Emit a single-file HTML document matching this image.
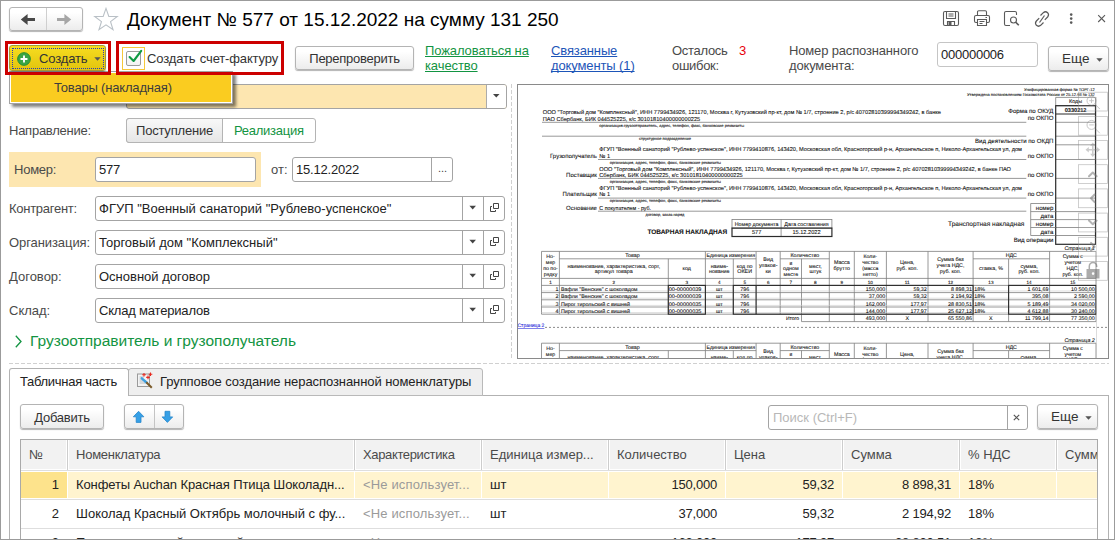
<!DOCTYPE html>
<html lang="ru"><head><meta charset="utf-8"><title>Документ № 577</title>
<style>
*{box-sizing:border-box;margin:0;padding:0}
html,body{width:1115px;height:540px;overflow:hidden;background:#fff}
body{position:relative;font-family:"Liberation Sans",sans-serif;font-size:13px;color:#333}
.a{position:absolute}
.t{position:absolute;white-space:nowrap;line-height:16px;font-size:13px}
.frame{position:absolute;left:0;top:0;width:1115px;height:540px;border:1px solid #9b9b9b;pointer-events:none;z-index:50}
.btn{position:absolute;border:1px solid #b4b4b4;border-radius:3px;background:linear-gradient(#ffffff 20%,#ececec);box-shadow:0 1px 1px rgba(0,0,0,.3);text-align:center;white-space:nowrap;color:#333;font-size:13px}
.inp{position:absolute;border:1px solid #a4a4a4;border-radius:3px;background:#fff;white-space:nowrap;overflow:hidden;font-size:13px;color:#222;padding-left:3px}
.lbl{position:absolute;white-space:nowrap;color:#4a4a4a;font-size:13px;line-height:16px}
.red{position:absolute;border:3px solid #cc0000}
.sep{position:absolute;top:0;bottom:0;width:1px;background:#a4a4a4}
.lnk{text-decoration-skip-ink:none;position:absolute;font-size:13px;line-height:16px;text-decoration:underline;white-space:nowrap}
svg{position:absolute;overflow:visible}
.h{color:#4a4a4a}.c{color:#222}.g{color:#9a9a9a}.r{text-align:right}
</style></head><body>
<div class="frame"></div>

<!-- ================= header ================= -->
<div id="hdr">
<div class="btn" style="left:9px;top:7px;width:74px;height:24px"></div>
<div class="a" style="left:46px;top:8px;width:1px;height:22px;background:#cfcfcf"></div>
<svg style="left:9px;top:7px" width="74" height="24" viewBox="0 0 74 24">
<path d="M11.8 12.5 L18.6 7.100 V11 H26 V14 H18.6 V17.900 Z" fill="#484848"/>
<path d="M62.2 12.5 L55.4 7.100 V11 H48 V14 H55.4 V17.900 Z" fill="#a6a6a6"/>
</svg>
<svg style="left:92.5px;top:7px" width="26" height="24" viewBox="0 0 24 22">
<path d="M12 1.2 L14.6 8.6 L22.4 8.7 L16.2 13.4 L18.5 20.9 L12 16.4 L5.5 20.9 L7.8 13.4 L1.6 8.7 L9.4 8.6 Z" fill="#fff" stroke="#b9c0c6" stroke-width="1"/>
</svg>
<div class="t" id="title" style="left:127px;top:8px;font-size:19px;line-height:24px;color:#000">Документ № 577 от 15.12.2022 на сумму 131 250</div>
<!-- right icons -->
<svg style="left:943px;top:10px" width="170" height="18" viewBox="0 0 170 18" fill="none" stroke="#5a5a5a" stroke-width="1.1">
<!-- save -->
<path d="M2 1.5 H14 Q15.5 1.5 15.5 3 V14 Q15.5 15.5 14 15.5 H2 Q0.5 15.5 0.5 14 V3 Q0.5 1.5 2 1.5 Z"/>
<path d="M3.5 1.5 V8.5 H12.5 V1.5 M5.5 4 H10.5 M5.5 6 H10.5"/>
<path d="M4.5 15.5 V11.5 H11.5 V15.5"/><rect x="5.5" y="12" width="3" height="3.5" fill="#5a5a5a" stroke="none"/>
<!-- print -->
<g transform="translate(31,0)">
<path d="M3.5 5.5 V2 Q3.5 0.8 4.7 0.8 H11.3 Q12.5 0.8 12.5 2 V5.5"/>
<path d="M3.5 12.5 H2 Q0.5 12.5 0.5 11 V7 Q0.5 5.5 2 5.5 H14 Q15.5 5.5 15.5 7 V11 Q15.5 12.5 14 12.5 H12.5"/>
<path d="M3.5 9.5 H12.5 V15.5 H3.5 Z M5.5 11.5 H10.5 M5.5 13.5 H8.5 M11.5 7.5 H13"/>
</g>
<!-- preview -->
<g transform="translate(61,0)">
<path d="M6 15.5 H2 Q0.5 15.5 0.5 14 V3 Q0.5 1.5 2 1.5 H11 Q12.5 1.5 12.5 3 V5"/>
<circle cx="9.5" cy="10" r="3"/><path d="M11.8 12.3 L14.8 15.3" stroke-width="1.6"/>
</g>
<!-- link -->
<g transform="translate(91,0)" stroke-width="1.2">
<path d="M6.5 5.5 L9.3 2.7 Q11.5 0.8 13.6 2.7 Q15.5 4.8 13.6 7 L10.8 9.8"/>
<path d="M9.5 12.5 L6.7 15.3 Q4.5 17.2 2.4 15.3 Q0.5 13.2 2.4 11 L5.2 8.2"/>
<path d="M5.5 12.5 L10.5 5.5"/>
</g>
<!-- dots -->
<g fill="#5a5a5a" stroke="none"><circle cx="128.2" cy="4.6" r="1.3"/><circle cx="128.2" cy="8.6" r="1.3"/><circle cx="128.2" cy="12.6" r="1.3"/></g>
<!-- close -->
<path d="M155.2 5.2 L162 12 M162 5.2 L155.2 12" stroke-width="1.1"/>
</svg>
</div>

<!-- ================= dropdown menu ================= -->
<div style="position:relative;z-index:5">
<div class="a" style="left:9px;top:71px;width:224px;height:33px;background:#facc20;border:1px solid #a3a3a3;box-shadow:inset 0 0 0 1px #fff,3px 3px 3px rgba(0,0,0,.5)"></div>
<div class="t" style="left:54px;top:80px;color:#3d3d3d;letter-spacing:-0.18px">Товары (накладная)</div>
</div>

<!-- ================= toolbar ================= -->
<div id="tb" style="position:relative;z-index:6">
<div class="red" style="left:5px;top:41px;width:106px;height:34px"></div>
<div class="btn" id="create" style="left:9px;top:45px;width:97px;height:26px;background:linear-gradient(#f7dd20,#e2c40e);border-color:#a59a35;box-shadow:0 1px 1px rgba(0,0,0,.3)"></div>
<div class="a" style="left:12px;top:48px;width:92px;height:21px;border:1px dotted #2b3bb5"></div>
<svg style="left:17px;top:51.500px" width="14" height="14" viewBox="0 0 15 15"><circle cx="7.5" cy="7.5" r="6.8" fill="#3aa544" stroke="#1f8a2e" stroke-width="1"/><path d="M7.5 3.8 V11.2 M3.8 7.5 H11.2" stroke="#fff" stroke-width="2"/></svg>
<div class="t" style="left:39px;top:51px;letter-spacing:-0.15px">Создать</div>
<svg style="left:94px;top:57px" width="7" height="4" viewBox="0 0 7 4"><path d="M0.3 0.3 H6.7 L3.5 3.800 Z" fill="#555"/></svg>

<div class="red" style="left:116px;top:41px;width:168px;height:34px"></div>
<div class="a" style="left:122px;top:47px;width:23px;height:23px;border:1px solid #f6c83a;background:#fff"></div>
<div class="a" style="left:126px;top:51px;width:15px;height:15px;border:1px solid #9c9c9c;border-radius:2px;background:linear-gradient(#fff,#f3f3f3)"></div>
<svg style="left:126px;top:48px" width="18" height="18" viewBox="0 0 18 18"><path d="M3.600 9 L7.600 13 L15.200 2.900" fill="none" stroke="#0f9a43" stroke-width="2.1" stroke-linecap="round" stroke-linejoin="round"/></svg>
<div class="t" style="left:147px;top:51px;word-spacing:1px;letter-spacing:-0.15px">Создать счет-фактуру</div>
<div class="btn" style="left:295px;top:46px;width:119px;height:24px;line-height:24px;letter-spacing:-0.26px">Перепроверить</div>
<div class="lnk" style="left:425px;top:43px;line-height:15px;color:#129442;letter-spacing:-0.1px">Пожаловаться на<br>качество</div>
<div class="lnk" style="left:551px;top:43px;line-height:15px;color:#1d55b8;letter-spacing:-0.12px">Связанные<br>документы (1)</div>
<div class="lbl" style="left:672px;top:43px;line-height:15px;letter-spacing:-0.3px">Осталось<br>ошибок:</div>
<div class="t" style="left:739px;top:43px;line-height:15px;color:#e8000b">3</div>
<div class="lbl" style="left:789px;top:43px;line-height:15px;letter-spacing:-0.16px">Номер распознанного<br>документа:</div>
<div class="inp" style="left:937px;top:42px;width:101px;height:25px;line-height:23px;border-color:#c5c5c5;letter-spacing:-0.25px">000000006</div>
<div class="btn" style="left:1048px;top:46px;width:61px;height:25px;line-height:24px;font-size:13.5px;text-align:left;padding-left:13px">Еще</div>
<svg style="left:1095.500px;top:57.500px" width="7" height="4" viewBox="0 0 7 4"><path d="M0.3 0.3 H6.7 L3.5 3.800 Z" fill="#555"/></svg>
</div>

<!-- ================= form ================= -->
<div id="form">
<div class="inp" style="left:126px;top:84px;width:381px;height:25px;background:#fde6b0"></div>
<div class="a" style="left:486px;top:85px;width:20px;height:23px;background:#fff;border-left:1px solid #ababab;border-radius:0 2px 2px 0"></div>
<svg style="left:492.500px;top:94.300px" width="6.6" height="3.6" viewBox="0 0 6.6 3.6"><path d="M0 0 H6.6 L3.3 3.600 Z" fill="#444"/></svg>

<div class="lbl" style="left:9px;top:123px;letter-spacing:-0.25px">Направление:</div>
<div class="btn" style="left:126px;top:118px;width:190px;height:25px;background:#fff;box-shadow:none"></div>
<div class="btn" style="left:126px;top:118px;width:97px;height:25px;line-height:24px;border-radius:3px 0 0 3px;box-shadow:none;background:linear-gradient(#f8f8f8,#e6e6e6);letter-spacing:-0.2px">Поступление</div>
<div class="t" style="left:234px;top:123px;color:#129442;letter-spacing:-0.26px">Реализация</div>

<div class="a" style="left:9px;top:152px;width:252px;height:35px;background:#fde6b0"></div>
<div class="lbl" style="left:14px;top:162px;letter-spacing:-0.24px">Номер:</div>
<div class="inp" style="left:95px;top:157px;width:161px;height:25px;line-height:23px;letter-spacing:-0.2px">577</div>
<div class="lbl" style="left:271px;top:162px">от:</div>
<div class="inp" style="left:292px;top:157px;width:161px;height:25px;line-height:23px;letter-spacing:-0.2px">15.12.2022<div class="sep" style="left:138px"></div></div>
<div class="t" style="left:438px;top:160px;font-size:11px;color:#444">...</div>

<div class="lbl" style="left:9px;top:201px;letter-spacing:-0.27px">Контрагент:</div>
<div class="inp fld" style="left:95px;top:196px;width:410px;height:25px;line-height:23px">ФГУП "Военный санаторий "Рублево-успенское"<div class="sep" style="left:366px"></div><div class="sep" style="left:387px"></div></div>
<div class="lbl" style="left:9px;top:235px;letter-spacing:-0.08px">Организация:</div>
<div class="inp fld" style="left:95px;top:230px;width:410px;height:25px;line-height:23px">Торговый дом "Комплексный"<div class="sep" style="left:366px"></div><div class="sep" style="left:387px"></div></div>
<div class="lbl" style="left:9px;top:269px">Договор:</div>
<div class="inp fld" style="left:95px;top:264px;width:410px;height:25px;line-height:23px">Основной договор<div class="sep" style="left:366px"></div><div class="sep" style="left:387px"></div></div>
<div class="lbl" style="left:9px;top:303px">Склад:</div>
<div class="inp fld" style="left:95px;top:298px;width:410px;height:25px;line-height:23px;letter-spacing:-0.19px">Склад материалов<div class="sep" style="left:366px"></div><div class="sep" style="left:387px"></div></div>
<svg style="left:0;top:0" width="520" height="330">
<defs><g id="dd"><path d="M0 0 H6.6 L3.3 3.600 Z" fill="#444"/></g>
<g id="op" fill="none" stroke="#444" stroke-width="1"><path d="M3.5 0.5 H8.5 V5.5 H3.5 Z"/><path d="M2 3.5 H0.5 V8.5 H5.5 V7"/></g></defs>
<use href="#dd" x="469.4" y="205.800"/><use href="#dd" x="469.4" y="239.800"/><use href="#dd" x="469.4" y="273.800"/><use href="#dd" x="469.4" y="307.800"/>
<use href="#op" x="490" y="203"/><use href="#op" x="490" y="237"/><use href="#op" x="490" y="271"/><use href="#op" x="490" y="305"/>
</svg>
<svg style="left:14.500px;top:334.800px" width="7" height="13" viewBox="0 0 7 13"><path d="M0.800 0.800 L6 6.500 L0.800 12.200" fill="none" stroke="#129442" stroke-width="1.3"/></svg>
<div class="t" style="left:30px;top:331px;font-size:15.5px;line-height:20px;color:#129442">Грузоотправитель и грузополучатель</div>
<div class="a" style="left:511px;top:84px;width:1px;height:276px;background:repeating-linear-gradient(180deg,#d0d0d0 0 4px,transparent 4px 6px)"></div>
<div class="a" style="left:9px;top:363px;width:1100px;height:1px;background:repeating-linear-gradient(90deg,#d0d0d0 0 4px,transparent 4px 6px)"></div>
</div>

<!-- ================= preview ================= -->
<div id="pv" class="a" style="left:517px;top:84px;width:592px;height:275px;border:1px solid #8a8a8a;background:#fff;overflow:hidden">
<!--PREVIEW-->
<svg style="left:-518px;top:-85px" width="1115" height="540" viewBox="0 0 1115 540" font-family="Liberation Sans, sans-serif" fill="#111" stroke="#111" stroke-width="0.09" text-rendering="geometricPrecision">
<text x="1094.8" y="91.2" font-size="4.00" text-anchor="end">Унифицированная форма № ТОРГ-12</text>
<text x="1094.8" y="95.7" font-size="4.00" text-anchor="end">Утверждена постановлением Госкомстата России от 25.12.98 № 132</text>
<text x="542.8" y="113.5" font-size="5.64" textLength="398.2" lengthAdjust="spacingAndGlyphs">ООО "Торговый дом "Комплексный", ИНН 7799434926, 121170, Москва г, Кутузовский пр-кт, дом № 1/7, строение 2, р/с 40702810399994349242, в банке</text>
<text x="542.8" y="120.6" font-size="5.64" textLength="157.4" lengthAdjust="spacingAndGlyphs">ПАО Сбербанк, БИК 044525225, к/с 30101810400000000225</text>
<path d="M542.0 122.3H1026.3" stroke="#7d7d7d" stroke-width="0.8"/>
<text x="599.3" y="126.8" font-size="4.00" textLength="144.8" lengthAdjust="spacingAndGlyphs">организация-грузоотправитель, адрес, телефон, факс, банковские реквизиты</text>
<path d="M542.0 136.2H1026.3" stroke="#7d7d7d" stroke-width="0.8"/>
<text x="639.0" y="140.2" font-size="4.00" textLength="52.0" lengthAdjust="spacingAndGlyphs">структурное подразделение</text>
<text x="599.3" y="151.1" font-size="5.64" textLength="422.7" lengthAdjust="spacingAndGlyphs">ФГУП "Военный санаторий "Рублево-успенское", ИНН 7799410876, 143420, Московская обл, Красногорский р-н, Архангельское п, Николо-Архангельская ул, дом</text>
<text x="596.9" y="157.6" font-size="6.00" text-anchor="end">Грузополучатель</text>
<text x="599.3" y="157.5" font-size="5.64">№ 1</text>
<path d="M598.0 159.5H1026.3" stroke="#7d7d7d" stroke-width="0.8"/>
<text x="609.8" y="163.7" font-size="4.00" textLength="111.2" lengthAdjust="spacingAndGlyphs">организация, адрес, телефон, факс, банковские реквизиты</text>
<text x="599.3" y="170.5" font-size="5.64" textLength="411.7" lengthAdjust="spacingAndGlyphs">ООО "Торговый дом "Комплексный", ИНН 7799434926, 121170, Москва г, Кутузовский пр-кт, дом № 1/7, строение 2, р/с 40702810399994349242, в банке ПАО</text>
<text x="596.9" y="176.9" font-size="6.00" text-anchor="end">Поставщик</text>
<text x="599.3" y="176.8" font-size="5.64" textLength="143.4" lengthAdjust="spacingAndGlyphs">Сбербанк, БИК 044525225, к/с 30101810400000000225</text>
<path d="M598.0 178.4H1026.3" stroke="#7d7d7d" stroke-width="0.8"/>
<text x="609.8" y="182.8" font-size="4.00" textLength="111.2" lengthAdjust="spacingAndGlyphs">организация, адрес, телефон, факс, банковские реквизиты</text>
<text x="599.3" y="189.9" font-size="5.64" textLength="422.7" lengthAdjust="spacingAndGlyphs">ФГУП "Военный санаторий "Рублево-успенское", ИНН 7799410876, 143420, Московская обл, Красногорский р-н, Архангельское п, Николо-Архангельская ул, дом</text>
<text x="596.9" y="196.2" font-size="6.00" text-anchor="end">Плательщик</text>
<text x="599.3" y="196.1" font-size="5.64">№ 1</text>
<path d="M598.0 198.1H1026.3" stroke="#7d7d7d" stroke-width="0.8"/>
<text x="609.8" y="202.4" font-size="4.00" textLength="111.2" lengthAdjust="spacingAndGlyphs">организация, адрес, телефон, факс, банковские реквизиты</text>
<text x="596.9" y="209.8" font-size="6.00" text-anchor="end">Основание</text>
<text x="599.3" y="209.9" font-size="5.64" textLength="51.8" lengthAdjust="spacingAndGlyphs">С покупателем - руб.</text>
<path d="M598.0 211.2H1026.3" stroke="#7d7d7d" stroke-width="0.8"/>
<text x="645.6" y="215.8" font-size="4.00" textLength="38.8" lengthAdjust="spacingAndGlyphs">договор, заказ-наряд</text>
<text x="1053.5" y="112.5" font-size="6.10" text-anchor="end">Форма по ОКУД</text>
<text x="1053.5" y="120.1" font-size="6.10" text-anchor="end">по ОКПО</text>
<text x="1053.5" y="142.9" font-size="6.10" text-anchor="end">Вид деятельности по ОКДП</text>
<text x="1053.5" y="157.6" font-size="6.10" text-anchor="end">по ОКПО</text>
<text x="1053.5" y="176.5" font-size="6.10" text-anchor="end">по ОКПО</text>
<text x="1053.5" y="195.5" font-size="6.10" text-anchor="end">по ОКПО</text>
<text x="1053.5" y="209.7" font-size="6.10" text-anchor="end">номер</text>
<text x="1053.5" y="217.7" font-size="6.10" text-anchor="end">дата</text>
<text x="1053.5" y="225.7" font-size="6.10" text-anchor="end">номер</text>
<text x="1053.5" y="233.7" font-size="6.10" text-anchor="end">дата</text>
<text x="1053.5" y="241.9" font-size="6.10" text-anchor="end">Вид операции</text>
<text x="1024.4" y="226.0" font-size="6.55" text-anchor="end">Транспортная накладная</text>
<text x="1075.6" y="103.4" font-size="5.40" text-anchor="middle">Коды</text>
<text x="1075.6" y="111.8" font-size="5.60" text-anchor="middle" font-weight="bold">0330212</text>
<path d="M1055.7 105.7H1095.5" stroke="#7d7d7d" stroke-width="0.8"/>
<path d="M1055.7 122.3H1095.5" stroke="#7d7d7d" stroke-width="0.8"/>
<path d="M1055.7 136.2H1095.5" stroke="#7d7d7d" stroke-width="0.8"/>
<path d="M1055.7 144.8H1095.5" stroke="#7d7d7d" stroke-width="0.8"/>
<path d="M1055.7 159.5H1095.5" stroke="#7d7d7d" stroke-width="0.8"/>
<path d="M1055.7 178.4H1095.5" stroke="#7d7d7d" stroke-width="0.8"/>
<path d="M1055.7 198.1H1095.5" stroke="#7d7d7d" stroke-width="0.8"/>
<path d="M1055.7 211.6H1095.5" stroke="#7d7d7d" stroke-width="0.8"/>
<path d="M1055.7 219.6H1095.5" stroke="#7d7d7d" stroke-width="0.8"/>
<path d="M1055.7 227.5H1095.5" stroke="#7d7d7d" stroke-width="0.8"/>
<path d="M1055.7 235.5H1095.5" stroke="#7d7d7d" stroke-width="0.8"/>
<path d="M1055.7 97.4H1095.5" stroke="#7d7d7d" stroke-width="0.8"/>
<path d="M1055.7 97.4V105.7" stroke="#7d7d7d" stroke-width="0.8"/>
<path d="M1095.5 97.4V105.7" stroke="#7d7d7d" stroke-width="0.8"/>
<rect x="1055.7" y="105.7" width="39.8" height="138.6" fill="none" stroke="#2b2b2b" stroke-width="1.2"/>
<path d="M1055.7 114.0H1095.5" stroke="#2b2b2b" stroke-width="1.0"/>
<path d="M1030.7 203.5V235.5" stroke="#7d7d7d" stroke-width="0.8"/>
<path d="M1030.7 203.5H1055.7" stroke="#7d7d7d" stroke-width="0.8"/>
<path d="M1030.7 211.6H1055.7" stroke="#7d7d7d" stroke-width="0.8"/>
<path d="M1030.7 219.6H1055.7" stroke="#7d7d7d" stroke-width="0.8"/>
<path d="M1030.7 227.5H1055.7" stroke="#7d7d7d" stroke-width="0.8"/>
<path d="M1030.7 235.5H1055.7" stroke="#7d7d7d" stroke-width="0.8"/>
<text x="647.4" y="234.0" font-size="6.50" textLength="79.8" lengthAdjust="spacingAndGlyphs" font-weight="bold">ТОВАРНАЯ НАКЛАДНАЯ</text>
<rect x="732.0" y="219.4" width="99.9" height="8.7" fill="none" stroke="#7d7d7d" stroke-width="0.8"/>
<path d="M781.1 219.4V236.5" stroke="#7d7d7d" stroke-width="0.8"/>
<rect x="732.0" y="228.1" width="99.9" height="8.4" fill="none" stroke="#2b2b2b" stroke-width="1.2"/>
<text x="756.6" y="225.6" font-size="5.30" text-anchor="middle">Номер документа</text>
<text x="806.5" y="225.6" font-size="5.30" text-anchor="middle">Дата составления</text>
<text x="756.6" y="234.3" font-size="5.64" text-anchor="middle">577</text>
<text x="806.5" y="234.3" font-size="5.64" text-anchor="middle">15.12.2022</text>
<text x="1094.8" y="249.8" font-size="5.30" text-anchor="end" font-style="italic">Страница 1</text>
<path d="M541.5 251.4H1096.0" stroke="#7d7d7d" stroke-width="0.8"/>
<path d="M541.5 278.4H1096.0" stroke="#7d7d7d" stroke-width="0.8"/>
<path d="M559.4 258.8H705.4" stroke="#7d7d7d" stroke-width="0.8"/>
<path d="M705.4 258.8H756.1" stroke="#7d7d7d" stroke-width="0.8"/>
<path d="M780.2 258.8H829.3" stroke="#7d7d7d" stroke-width="0.8"/>
<path d="M973.1 258.8H1049.6" stroke="#7d7d7d" stroke-width="0.8"/>
<path d="M541.5 251.4V314.2" stroke="#7d7d7d" stroke-width="0.8"/>
<path d="M559.4 251.4V314.2" stroke="#7d7d7d" stroke-width="0.8"/>
<path d="M668.3 258.8V314.2" stroke="#7d7d7d" stroke-width="0.8"/>
<path d="M705.4 251.4V314.2" stroke="#7d7d7d" stroke-width="0.8"/>
<path d="M733.3 258.8V314.2" stroke="#7d7d7d" stroke-width="0.8"/>
<path d="M756.1 251.4V314.2" stroke="#7d7d7d" stroke-width="0.8"/>
<path d="M780.2 251.4V314.2" stroke="#7d7d7d" stroke-width="0.8"/>
<path d="M801.5 258.8V314.2" stroke="#7d7d7d" stroke-width="0.8"/>
<path d="M829.3 251.4V314.2" stroke="#7d7d7d" stroke-width="0.8"/>
<path d="M854.3 251.4V314.2" stroke="#7d7d7d" stroke-width="0.8"/>
<path d="M886.4 251.4V314.2" stroke="#7d7d7d" stroke-width="0.8"/>
<path d="M928.0 251.4V314.2" stroke="#7d7d7d" stroke-width="0.8"/>
<path d="M973.1 251.4V314.2" stroke="#7d7d7d" stroke-width="0.8"/>
<path d="M1008.6 258.8V314.2" stroke="#7d7d7d" stroke-width="0.8"/>
<path d="M1049.6 251.4V314.2" stroke="#7d7d7d" stroke-width="0.8"/>
<path d="M1096.0 251.4V314.2" stroke="#7d7d7d" stroke-width="0.8"/>
<text x="550.5" y="258.0" font-size="5.20" text-anchor="middle">Но-</text>
<text x="550.5" y="263.9" font-size="5.20" text-anchor="middle">мер</text>
<text x="550.5" y="269.8" font-size="5.20" text-anchor="middle">по по-</text>
<text x="550.5" y="275.7" font-size="5.20" text-anchor="middle">рядку</text>
<text x="632.4" y="256.9" font-size="5.35" text-anchor="middle">Товар</text>
<text x="613.8" y="267.5" font-size="5.35" text-anchor="middle">наименование, характеристика, сорт,</text>
<text x="613.8" y="273.4" font-size="5.35" text-anchor="middle">артикул товара</text>
<text x="686.8" y="270.4" font-size="5.35" text-anchor="middle">код</text>
<text x="730.8" y="256.9" font-size="5.20" text-anchor="middle">Единица измерения</text>
<text x="719.3" y="267.5" font-size="5.35" text-anchor="middle">наиме-</text>
<text x="719.3" y="273.4" font-size="5.35" text-anchor="middle">нование</text>
<text x="744.7" y="267.5" font-size="5.35" text-anchor="middle">код по</text>
<text x="744.7" y="273.4" font-size="5.35" text-anchor="middle">ОКЕИ</text>
<text x="768.2" y="260.8" font-size="5.35" text-anchor="middle">Вид</text>
<text x="768.2" y="266.7" font-size="5.35" text-anchor="middle">упаков-</text>
<text x="768.2" y="272.6" font-size="5.35" text-anchor="middle">ки</text>
<text x="804.8" y="256.9" font-size="5.35" text-anchor="middle">Количество</text>
<text x="790.9" y="264.5" font-size="5.35" text-anchor="middle">в</text>
<text x="790.9" y="270.4" font-size="5.35" text-anchor="middle">одном</text>
<text x="790.9" y="276.3" font-size="5.35" text-anchor="middle">месте</text>
<text x="815.4" y="267.5" font-size="5.35" text-anchor="middle">мест,</text>
<text x="815.4" y="273.4" font-size="5.35" text-anchor="middle">штук</text>
<text x="841.8" y="263.8" font-size="5.35" text-anchor="middle">Масса</text>
<text x="841.8" y="269.7" font-size="5.35" text-anchor="middle">брутто</text>
<text x="870.3" y="257.8" font-size="5.20" text-anchor="middle">Коли-</text>
<text x="870.3" y="263.7" font-size="5.20" text-anchor="middle">чество</text>
<text x="870.3" y="269.6" font-size="5.20" text-anchor="middle">(масса</text>
<text x="870.3" y="275.5" font-size="5.20" text-anchor="middle">нетто)</text>
<text x="907.2" y="263.8" font-size="5.35" text-anchor="middle">Цена,</text>
<text x="907.2" y="269.7" font-size="5.35" text-anchor="middle">руб. коп.</text>
<text x="950.5" y="260.8" font-size="5.35" text-anchor="middle">Сумма без</text>
<text x="950.5" y="266.7" font-size="5.35" text-anchor="middle">учета НДС,</text>
<text x="950.5" y="272.6" font-size="5.35" text-anchor="middle">руб. коп.</text>
<text x="1011.3" y="256.9" font-size="5.35" text-anchor="middle">НДС</text>
<text x="990.9" y="270.4" font-size="5.35" text-anchor="middle">ставка, %</text>
<text x="1029.1" y="267.5" font-size="5.35" text-anchor="middle">сумма,</text>
<text x="1029.1" y="273.4" font-size="5.35" text-anchor="middle">руб. коп.</text>
<text x="1072.8" y="257.8" font-size="5.20" text-anchor="middle">Сумма с</text>
<text x="1072.8" y="263.7" font-size="5.20" text-anchor="middle">учетом</text>
<text x="1072.8" y="269.6" font-size="5.20" text-anchor="middle">НДС,</text>
<text x="1072.8" y="275.5" font-size="5.20" text-anchor="middle">руб. коп.</text>
<path d="M541.5 285.4H1096.0" stroke="#7d7d7d" stroke-width="0.8"/>
<text x="550.5" y="283.7" font-size="4.60" text-anchor="middle">1</text>
<text x="613.8" y="283.7" font-size="4.60" text-anchor="middle">2</text>
<text x="686.8" y="283.7" font-size="4.60" text-anchor="middle">3</text>
<text x="719.3" y="283.7" font-size="4.60" text-anchor="middle">4</text>
<text x="744.7" y="283.7" font-size="4.60" text-anchor="middle">5</text>
<text x="768.2" y="283.7" font-size="4.60" text-anchor="middle">6</text>
<text x="790.9" y="283.7" font-size="4.60" text-anchor="middle">7</text>
<text x="815.4" y="283.7" font-size="4.60" text-anchor="middle">8</text>
<text x="841.8" y="283.7" font-size="4.60" text-anchor="middle">9</text>
<text x="870.3" y="283.7" font-size="4.60" text-anchor="middle">10</text>
<text x="907.2" y="283.7" font-size="4.60" text-anchor="middle">11</text>
<text x="950.5" y="283.7" font-size="4.60" text-anchor="middle">12</text>
<text x="990.9" y="283.7" font-size="4.60" text-anchor="middle">13</text>
<text x="1029.1" y="283.7" font-size="4.60" text-anchor="middle">14</text>
<text x="1072.8" y="283.7" font-size="4.60" text-anchor="middle">15</text>
<path d="M541.5 292.6H1096.0" stroke="#7d7d7d" stroke-width="0.8"/>
<path d="M541.5 291.0H1096.0" stroke="#c9c9c9" stroke-width="0.6"/>
<text x="558.4" y="291.1" font-size="5.35" text-anchor="end">1</text>
<text x="560.9" y="291.1" font-size="5.35">Вафли "Венские" с шоколадом</text>
<text x="668.8" y="291.1" font-size="5.35" textLength="32.6" lengthAdjust="spacingAndGlyphs">00-00000039</text>
<text x="719.3" y="291.1" font-size="5.35" text-anchor="middle">шт</text>
<text x="744.7" y="291.1" font-size="5.35" text-anchor="middle">796</text>
<text x="885.2" y="291.1" font-size="5.35" text-anchor="end">150,000</text>
<text x="926.8" y="291.1" font-size="5.35" text-anchor="end">59,32</text>
<text x="971.9" y="291.1" font-size="5.35" text-anchor="end">8 898,31</text>
<text x="974.3" y="291.1" font-size="5.35">18%</text>
<text x="1048.4" y="291.1" font-size="5.35" text-anchor="end">1 601,69</text>
<text x="1094.8" y="291.1" font-size="5.35" text-anchor="end">10 500,00</text>
<path d="M541.5 299.8H1096.0" stroke="#7d7d7d" stroke-width="0.8"/>
<path d="M541.5 298.2H1096.0" stroke="#c9c9c9" stroke-width="0.6"/>
<text x="558.4" y="298.3" font-size="5.35" text-anchor="end">2</text>
<text x="560.9" y="298.3" font-size="5.35">Вафли "Венские" с шоколадом</text>
<text x="668.8" y="298.3" font-size="5.35" textLength="32.6" lengthAdjust="spacingAndGlyphs">00-00000039</text>
<text x="719.3" y="298.3" font-size="5.35" text-anchor="middle">шт</text>
<text x="744.7" y="298.3" font-size="5.35" text-anchor="middle">796</text>
<text x="885.2" y="298.3" font-size="5.35" text-anchor="end">37,000</text>
<text x="926.8" y="298.3" font-size="5.35" text-anchor="end">59,32</text>
<text x="971.9" y="298.3" font-size="5.35" text-anchor="end">2 194,92</text>
<text x="974.3" y="298.3" font-size="5.35">18%</text>
<text x="1048.4" y="298.3" font-size="5.35" text-anchor="end">395,08</text>
<text x="1094.8" y="298.3" font-size="5.35" text-anchor="end">2 590,00</text>
<path d="M541.5 307.0H1096.0" stroke="#7d7d7d" stroke-width="0.8"/>
<path d="M541.5 305.4H1096.0" stroke="#c9c9c9" stroke-width="0.6"/>
<text x="558.4" y="305.5" font-size="5.35" text-anchor="end">3</text>
<text x="560.9" y="305.5" font-size="5.35">Пирог тирольский с вишней</text>
<text x="668.8" y="305.5" font-size="5.35" textLength="32.6" lengthAdjust="spacingAndGlyphs">00-00000035</text>
<text x="719.3" y="305.5" font-size="5.35" text-anchor="middle">шт</text>
<text x="744.7" y="305.5" font-size="5.35" text-anchor="middle">796</text>
<text x="885.2" y="305.5" font-size="5.35" text-anchor="end">162,000</text>
<text x="926.8" y="305.5" font-size="5.35" text-anchor="end">177,97</text>
<text x="971.9" y="305.5" font-size="5.35" text-anchor="end">28 830,51</text>
<text x="974.3" y="305.5" font-size="5.35">18%</text>
<text x="1048.4" y="305.5" font-size="5.35" text-anchor="end">5 189,49</text>
<text x="1094.8" y="305.5" font-size="5.35" text-anchor="end">34 020,00</text>
<path d="M541.5 314.2H1096.0" stroke="#7d7d7d" stroke-width="0.8"/>
<path d="M541.5 312.6H1096.0" stroke="#c9c9c9" stroke-width="0.6"/>
<text x="558.4" y="312.7" font-size="5.35" text-anchor="end">4</text>
<text x="560.9" y="312.7" font-size="5.35">Пирог тирольский с вишней</text>
<text x="668.8" y="312.7" font-size="5.35" textLength="32.6" lengthAdjust="spacingAndGlyphs">00-00000035</text>
<text x="719.3" y="312.7" font-size="5.35" text-anchor="middle">шт</text>
<text x="744.7" y="312.7" font-size="5.35" text-anchor="middle">796</text>
<text x="885.2" y="312.7" font-size="5.35" text-anchor="end">144,000</text>
<text x="926.8" y="312.7" font-size="5.35" text-anchor="end">177,97</text>
<text x="971.9" y="312.7" font-size="5.35" text-anchor="end">25 627,12</text>
<text x="974.3" y="312.7" font-size="5.35">18%</text>
<text x="1048.4" y="312.7" font-size="5.35" text-anchor="end">4 612,88</text>
<text x="1094.8" y="312.7" font-size="5.35" text-anchor="end">30 240,00</text>
<path d="M801.5 321.6H1096.0" stroke="#7d7d7d" stroke-width="0.8"/>
<path d="M801.5 314.2V321.6" stroke="#7d7d7d" stroke-width="0.8"/>
<path d="M829.3 314.2V321.6" stroke="#7d7d7d" stroke-width="0.8"/>
<path d="M854.3 314.2V321.6" stroke="#7d7d7d" stroke-width="0.8"/>
<path d="M886.4 314.2V321.6" stroke="#7d7d7d" stroke-width="0.8"/>
<path d="M928.0 314.2V321.6" stroke="#7d7d7d" stroke-width="0.8"/>
<path d="M973.1 314.2V321.6" stroke="#7d7d7d" stroke-width="0.8"/>
<path d="M1008.6 314.2V321.6" stroke="#7d7d7d" stroke-width="0.8"/>
<path d="M1049.6 314.2V321.6" stroke="#7d7d7d" stroke-width="0.8"/>
<path d="M1096.0 314.2V321.6" stroke="#7d7d7d" stroke-width="0.8"/>
<text x="799.0" y="319.9" font-size="5.00" text-anchor="end">Итого</text>
<text x="885.2" y="320.0" font-size="5.35" text-anchor="end">493,000</text>
<text x="907.2" y="320.0" font-size="5.35" text-anchor="middle">Х</text>
<text x="971.9" y="320.0" font-size="5.35" text-anchor="end">65 550,86</text>
<text x="990.9" y="320.0" font-size="5.35" text-anchor="middle">Х</text>
<text x="1048.4" y="320.0" font-size="5.35" text-anchor="end">11 799,14</text>
<text x="1094.8" y="320.0" font-size="5.35" text-anchor="end">77 350,00</text>
<rect x="668.3" y="285.4" width="37.1" height="28.8" fill="none" stroke="#2b2b2b" stroke-width="1.1"/>
<rect x="733.3" y="285.4" width="239.8" height="28.8" fill="none" stroke="#2b2b2b" stroke-width="1.1"/>
<rect x="1008.6" y="285.4" width="87.4" height="28.8" fill="none" stroke="#2b2b2b" stroke-width="1.1"/>
<path d="M756.1 285.4V314.2" stroke="#2b2b2b" stroke-width="1.0"/>
<text x="517.5" y="327.3" font-size="5.00" fill="#1a1ad8" stroke="#1a1ad8" text-decoration="underline">Страница 2</text>
<path d="M545 327.4H1108" stroke="#6f6f6f" stroke-width="0.8" stroke-dasharray="2 2"/>
<text x="1094.8" y="341.7" font-size="5.30" text-anchor="end" font-style="italic">Страница 2</text>
<path d="M541.5 343.2H1096.0" stroke="#7d7d7d" stroke-width="0.8"/>
<path d="M541.5 370.2H1096.0" stroke="#7d7d7d" stroke-width="0.8"/>
<path d="M559.4 350.6H705.4" stroke="#7d7d7d" stroke-width="0.8"/>
<path d="M705.4 350.6H756.1" stroke="#7d7d7d" stroke-width="0.8"/>
<path d="M780.2 350.6H829.3" stroke="#7d7d7d" stroke-width="0.8"/>
<path d="M973.1 350.6H1049.6" stroke="#7d7d7d" stroke-width="0.8"/>
<path d="M541.5 343.2V370.2" stroke="#7d7d7d" stroke-width="0.8"/>
<path d="M559.4 343.2V370.2" stroke="#7d7d7d" stroke-width="0.8"/>
<path d="M668.3 350.6V370.2" stroke="#7d7d7d" stroke-width="0.8"/>
<path d="M705.4 343.2V370.2" stroke="#7d7d7d" stroke-width="0.8"/>
<path d="M733.3 350.6V370.2" stroke="#7d7d7d" stroke-width="0.8"/>
<path d="M756.1 343.2V370.2" stroke="#7d7d7d" stroke-width="0.8"/>
<path d="M780.2 343.2V370.2" stroke="#7d7d7d" stroke-width="0.8"/>
<path d="M801.5 350.6V370.2" stroke="#7d7d7d" stroke-width="0.8"/>
<path d="M829.3 343.2V370.2" stroke="#7d7d7d" stroke-width="0.8"/>
<path d="M854.3 343.2V370.2" stroke="#7d7d7d" stroke-width="0.8"/>
<path d="M886.4 343.2V370.2" stroke="#7d7d7d" stroke-width="0.8"/>
<path d="M928.0 343.2V370.2" stroke="#7d7d7d" stroke-width="0.8"/>
<path d="M973.1 343.2V370.2" stroke="#7d7d7d" stroke-width="0.8"/>
<path d="M1008.6 350.6V370.2" stroke="#7d7d7d" stroke-width="0.8"/>
<path d="M1049.6 343.2V370.2" stroke="#7d7d7d" stroke-width="0.8"/>
<path d="M1096.0 343.2V370.2" stroke="#7d7d7d" stroke-width="0.8"/>
<text x="550.5" y="349.8" font-size="5.20" text-anchor="middle">Но-</text>
<text x="550.5" y="355.7" font-size="5.20" text-anchor="middle">мер</text>
<text x="550.5" y="361.6" font-size="5.20" text-anchor="middle">по по-</text>
<text x="550.5" y="367.5" font-size="5.20" text-anchor="middle">рядку</text>
<text x="632.4" y="348.7" font-size="5.35" text-anchor="middle">Товар</text>
<text x="613.8" y="359.3" font-size="5.35" text-anchor="middle">наименование, характеристика, сорт,</text>
<text x="613.8" y="365.2" font-size="5.35" text-anchor="middle">артикул товара</text>
<text x="686.8" y="362.2" font-size="5.35" text-anchor="middle">код</text>
<text x="730.8" y="348.7" font-size="5.20" text-anchor="middle">Единица измерения</text>
<text x="719.3" y="359.3" font-size="5.35" text-anchor="middle">наиме-</text>
<text x="719.3" y="365.2" font-size="5.35" text-anchor="middle">нование</text>
<text x="744.7" y="359.3" font-size="5.35" text-anchor="middle">код по</text>
<text x="744.7" y="365.2" font-size="5.35" text-anchor="middle">ОКЕИ</text>
<text x="768.2" y="352.6" font-size="5.35" text-anchor="middle">Вид</text>
<text x="768.2" y="358.5" font-size="5.35" text-anchor="middle">упаков-</text>
<text x="768.2" y="364.4" font-size="5.35" text-anchor="middle">ки</text>
<text x="804.8" y="348.7" font-size="5.35" text-anchor="middle">Количество</text>
<text x="790.9" y="356.3" font-size="5.35" text-anchor="middle">в</text>
<text x="790.9" y="362.2" font-size="5.35" text-anchor="middle">одном</text>
<text x="790.9" y="368.1" font-size="5.35" text-anchor="middle">месте</text>
<text x="815.4" y="359.3" font-size="5.35" text-anchor="middle">мест,</text>
<text x="815.4" y="365.2" font-size="5.35" text-anchor="middle">штук</text>
<text x="841.8" y="355.6" font-size="5.35" text-anchor="middle">Масса</text>
<text x="841.8" y="361.5" font-size="5.35" text-anchor="middle">брутто</text>
<text x="870.3" y="349.6" font-size="5.20" text-anchor="middle">Коли-</text>
<text x="870.3" y="355.5" font-size="5.20" text-anchor="middle">чество</text>
<text x="870.3" y="361.4" font-size="5.20" text-anchor="middle">(масса</text>
<text x="870.3" y="367.3" font-size="5.20" text-anchor="middle">нетто)</text>
<text x="907.2" y="355.6" font-size="5.35" text-anchor="middle">Цена,</text>
<text x="907.2" y="361.5" font-size="5.35" text-anchor="middle">руб. коп.</text>
<text x="950.5" y="352.6" font-size="5.35" text-anchor="middle">Сумма без</text>
<text x="950.5" y="358.5" font-size="5.35" text-anchor="middle">учета НДС,</text>
<text x="950.5" y="364.4" font-size="5.35" text-anchor="middle">руб. коп.</text>
<text x="1011.3" y="348.7" font-size="5.35" text-anchor="middle">НДС</text>
<text x="990.9" y="362.2" font-size="5.35" text-anchor="middle">ставка, %</text>
<text x="1029.1" y="359.3" font-size="5.35" text-anchor="middle">сумма,</text>
<text x="1029.1" y="365.2" font-size="5.35" text-anchor="middle">руб. коп.</text>
<text x="1072.8" y="349.6" font-size="5.20" text-anchor="middle">Сумма с</text>
<text x="1072.8" y="355.5" font-size="5.20" text-anchor="middle">учетом</text>
<text x="1072.8" y="361.4" font-size="5.20" text-anchor="middle">НДС,</text>
<text x="1072.8" y="367.3" font-size="5.20" text-anchor="middle">руб. коп.</text>
<path d="M1096.5 97.0V358.0" stroke="#c4c4c4" stroke-width="0.6"/>
<rect x="1078.5" y="92.2" width="29" height="18.800" fill="#fff" fill-opacity="0.1" stroke="#8a8a8a" stroke-opacity="0.5" stroke-width="0.8"/>
<rect x="1078.5" y="116.4" width="29" height="18.800" fill="#fff" fill-opacity="0.1" stroke="#8a8a8a" stroke-opacity="0.5" stroke-width="0.8"/>
<rect x="1078.5" y="140.5" width="29" height="18.800" fill="#fff" fill-opacity="0.1" stroke="#8a8a8a" stroke-opacity="0.5" stroke-width="0.8"/>
<rect x="1078.5" y="164.7" width="29" height="18.800" fill="#fff" fill-opacity="0.1" stroke="#8a8a8a" stroke-opacity="0.5" stroke-width="0.8"/>
<rect x="1078.5" y="188.9" width="29" height="18.800" fill="#fff" fill-opacity="0.1" stroke="#8a8a8a" stroke-opacity="0.5" stroke-width="0.8"/>
<rect x="1078.5" y="213.1" width="29" height="18.800" fill="#fff" fill-opacity="0.1" stroke="#8a8a8a" stroke-opacity="0.5" stroke-width="0.8"/>
<rect x="1078.5" y="237.3" width="29" height="18.800" fill="#fff" fill-opacity="0.1" stroke="#8a8a8a" stroke-opacity="0.5" stroke-width="0.8"/>
<rect x="1078.5" y="261.5" width="29" height="18.800" fill="#fff" fill-opacity="0.1" stroke="#8a8a8a" stroke-opacity="0.5" stroke-width="0.8"/>
<g fill="none" stroke="#858585" stroke-width="0.9" opacity="0.5">
<circle cx="1091.500" cy="100.700" r="4.5"/><path d="M1089.2 100.700H1093.800M1091.500 98.400V103M1094.800 104L1099.800 109"/>
<circle cx="1091.500" cy="124.900" r="4.5"/><path d="M1089.2 124.900H1093.800M1094.800 128.200L1099.800 133.200"/>
</g>
<g fill="#858585" stroke="none" opacity="0.5">
<path d="M1092.800 142.400l2.700 3.300h-1.900v3.200h3.200v-1.900l3.300 2.700-3.300 2.700v-1.900h-3.200v3.200h1.900l-2.700 3.300-2.700-3.300h1.900v-3.200h-3.200v1.900l-3.300-2.700 3.300-2.700v1.900h3.200v-3.200h-1.900z" fill-opacity="0.85"/>
</g>
<g fill="none" stroke="#777" stroke-width="2" stroke-linecap="round" stroke-linejoin="round" opacity="0.55">
<path d="M1089 176.200l3.800-3.600 3.800 3.600"/>
<path d="M1094.600 194.500l-3.600 3.800 3.600 3.800"/>
<path d="M1089 220.600l3.800 3.600 3.800-3.600"/>
<path d="M1091 242.900l3.600 3.800-3.600 3.800"/>
</g>
<path d="M1086.500 269h13v9.500h-13zM1091.800 273.600a1.300 1.300 0 1 0 2.600 0a1.300 1.300 0 1 0-2.600 0z" fill="#666" opacity="0.55" stroke="none" fill-rule="evenodd"/>
<path d="M1089.300 269v-2.800a3.700 3.700 0 0 1 7.400 0v0.800" fill="none" stroke="#666" opacity="0.55" stroke-width="1.5"/>
</svg>
<!--/PREVIEW-->
</div>

<!-- ================= tabs ================= -->
<div id="tabs">
<div class="a" style="left:9px;top:395px;width:1100px;height:160px;border:1px solid #b2b2b2;background:#fff"></div>
<div class="a" style="left:128px;top:368px;width:355px;height:28px;border:1px solid #b9b9b9;border-radius:3px 3px 0 0;background:#efefef"></div>
<div class="a" style="left:9px;top:368px;width:120px;height:28px;border:1px solid #b2b2b2;border-bottom:none;border-radius:3px 3px 0 0;background:#fff"></div>
<div class="t" style="left:20px;top:374px;color:#222;letter-spacing:-0.29px">Табличная часть</div>
<div class="t" style="left:160px;top:374px;color:#222;letter-spacing:-0.08px">Групповое создание нераспознанной номенклатуры</div>
<svg style="left:136px;top:372px" width="18" height="18" viewBox="0 0 18 18">
<rect x="1.5" y="2" width="12" height="12.5" fill="#f3f3f3" stroke="#9a9a9a" stroke-width="1"/>
<path d="M3.5 5H8M3.5 7H7M3.500 9H7.500M3.500 11H9" stroke="#b6bcc2" stroke-width="1"/>
<path d="M5.800 6.300L10.500 10.500" stroke="#3d9fe0" stroke-width="2.4" stroke-linecap="round"/>
<path d="M10.300 10.300L15.800 15.800" stroke="#7a5a2a" stroke-width="2"/>
<path d="M8 1V4.600M6.200 2.800H9.800M12 3.600V7.200M10.200 5.400H13.800M14.500 0.500V4.100M12.700 2.300H16.300" stroke="#e8281e" stroke-width="1.1"/>
</svg>

<div class="btn" style="left:20px;top:404px;width:84px;height:25px;line-height:25px;letter-spacing:-0.23px">Добавить</div>
<div class="btn" style="left:124px;top:404px;width:60px;height:25px"></div>
<div class="a" style="left:154px;top:405px;width:1px;height:23px;background:#c4c4c4"></div>
<svg style="left:124px;top:404px" width="60" height="25" viewBox="0 0 60 25">
<path d="M14.6 7.300 L19.900 12.800 H17 V18.400 H12.2 V12.800 H9.300 Z" fill="#36a0e6" stroke="#2787cc" stroke-width="0.8"/>
<path d="M43.4 18.400 L48.700 12.900 H45.800 V7.300 H41 V12.900 H38.100 Z" fill="#36a0e6" stroke="#2787cc" stroke-width="0.8"/>
</svg>
<div class="inp" style="left:768px;top:405px;width:260px;height:25px;line-height:23px;color:#b8b8b8;font-size:13px;padding-left:4px">Поиск (Ctrl+F)<div class="sep" style="left:238px"></div></div>
<svg style="left:1012px;top:413px" width="9" height="9" viewBox="0 0 9 9"><path d="M1.800 1.800 L7.200 7.200 M7.200 1.800 L1.800 7.200" stroke="#555" stroke-width="1.2"/></svg>
<div class="btn" style="left:1037px;top:404px;width:61px;height:25px;line-height:24px;font-size:13.5px;text-align:left;padding-left:13px">Еще</div>
<svg style="left:1084.500px;top:416px" width="7" height="4" viewBox="0 0 7 4"><path d="M0.3 0.3 H6.7 L3.5 3.800 Z" fill="#555"/></svg>

<!-- table -->
<div id="grid" class="a" style="left:20px;top:439px;width:1078px;height:110px;border:1px solid #a9a9a9;border-bottom:none;background:#fff;overflow:hidden">
<div class="a" style="left:0;top:0;width:1078px;height:29px;background:#f2f2f2"></div>
<div class="a" style="left:0;top:32px;width:1078px;height:26px;background:#fff4cf"></div>
<div class="a" style="left:0;top:32px;width:46px;height:26px;background:#fde38c"></div>
<div class="a" style="left:0;top:30px;width:1078px;height:1px;background:#dedede"></div>
<div class="a" style="left:0;top:59px;width:1078px;height:1px;background:#dedede"></div>
<div class="a" style="left:0;top:88px;width:1078px;height:1px;background:#dedede"></div>
<div class="a" style="left:45px;top:0;width:3px;height:30px;background:#fff"></div><div class="a" style="left:46px;top:0;width:1px;height:30px;background:#cdcdcd"></div><div class="a" style="left:46px;top:32px;width:1px;height:26px;background:#fff"></div>
<div class="a" style="left:332px;top:0;width:3px;height:30px;background:#fff"></div><div class="a" style="left:333px;top:0;width:1px;height:30px;background:#cdcdcd"></div><div class="a" style="left:333px;top:32px;width:1px;height:26px;background:#fff"></div>
<div class="a" style="left:459px;top:0;width:3px;height:30px;background:#fff"></div><div class="a" style="left:460px;top:0;width:1px;height:30px;background:#cdcdcd"></div><div class="a" style="left:460px;top:32px;width:1px;height:26px;background:#fff"></div>
<div class="a" style="left:586px;top:0;width:3px;height:30px;background:#fff"></div><div class="a" style="left:587px;top:0;width:1px;height:30px;background:#cdcdcd"></div><div class="a" style="left:587px;top:32px;width:1px;height:26px;background:#fff"></div>
<div class="a" style="left:703px;top:0;width:3px;height:30px;background:#fff"></div><div class="a" style="left:704px;top:0;width:1px;height:30px;background:#cdcdcd"></div><div class="a" style="left:704px;top:32px;width:1px;height:26px;background:#fff"></div>
<div class="a" style="left:820px;top:0;width:3px;height:30px;background:#fff"></div><div class="a" style="left:821px;top:0;width:1px;height:30px;background:#cdcdcd"></div><div class="a" style="left:821px;top:32px;width:1px;height:26px;background:#fff"></div>
<div class="a" style="left:937px;top:0;width:3px;height:30px;background:#fff"></div><div class="a" style="left:938px;top:0;width:1px;height:30px;background:#cdcdcd"></div><div class="a" style="left:938px;top:32px;width:1px;height:26px;background:#fff"></div>
<div class="a" style="left:1034px;top:0;width:3px;height:30px;background:#fff"></div><div class="a" style="left:1035px;top:0;width:1px;height:30px;background:#cdcdcd"></div><div class="a" style="left:1035px;top:32px;width:1px;height:26px;background:#fff"></div>
<div class="t h" style="left:8px;top:7px">№</div>
<div class="t h" style="left:55px;top:7px;letter-spacing:-0.24px">Номенклатура</div>
<div class="t h" style="left:342px;top:7px;letter-spacing:-0.36px">Характеристика</div>
<div class="t h" style="left:469px;top:7px">Единица измер...</div>
<div class="t h" style="left:596px;top:7px">Количество</div>
<div class="t h" style="left:713px;top:7px">Цена</div>
<div class="t h" style="left:830px;top:7px">Сумма</div>
<div class="t h" style="left:947px;top:7px">% НДС</div>
<div class="t h" style="left:1044px;top:7px">Сумм</div>
<div class="t c r" style="left:0;width:38px;top:37px">1</div>
<div class="t c" style="left:55px;top:37px;letter-spacing:-0.11px">Конфеты Auchan Красная Птица Шоколадн...</div>
<div class="t c g" style="left:342px;top:37px;letter-spacing:0.15px">&lt;Не использует...</div>
<div class="t c" style="left:469px;top:37px">шт</div>
<div class="t c r" style="left:596px;width:100px;top:37px;letter-spacing:-0.2px">150,000</div>
<div class="t c r" style="left:713px;width:100px;top:37px;letter-spacing:-0.2px">59,32</div>
<div class="t c r" style="left:830px;width:100px;top:37px;letter-spacing:-0.2px">8 898,31</div>
<div class="t c" style="left:947px;top:37px">18%</div>
<div class="t c r" style="left:0;width:38px;top:66px">2</div>
<div class="t c" style="left:55px;top:66px">Шоколад Красный Октябрь молочный с фу...</div>
<div class="t c g" style="left:342px;top:66px;letter-spacing:0.15px">&lt;Не использует...</div>
<div class="t c" style="left:469px;top:66px">шт</div>
<div class="t c r" style="left:596px;width:100px;top:66px;letter-spacing:-0.2px">37,000</div>
<div class="t c r" style="left:713px;width:100px;top:66px;letter-spacing:-0.2px">59,32</div>
<div class="t c r" style="left:830px;width:100px;top:66px;letter-spacing:-0.2px">2 194,92</div>
<div class="t c" style="left:947px;top:66px">18%</div>
<div class="t c r" style="left:0;width:38px;top:95px">3</div>
<div class="t c" style="left:55px;top:95px">Пирог тирольский с вишней</div>
<div class="t c g" style="left:342px;top:95px;letter-spacing:0.15px">&lt;Не использует...</div>
<div class="t c" style="left:469px;top:95px">шт</div>
<div class="t c r" style="left:596px;width:100px;top:95px;letter-spacing:-0.2px">162,000</div>
<div class="t c r" style="left:713px;width:100px;top:95px;letter-spacing:-0.2px">177,97</div>
<div class="t c r" style="left:830px;width:100px;top:95px;letter-spacing:-0.2px">28 830,51</div>
<div class="t c" style="left:947px;top:95px">18%</div>
</div>
</div>
</body></html>
